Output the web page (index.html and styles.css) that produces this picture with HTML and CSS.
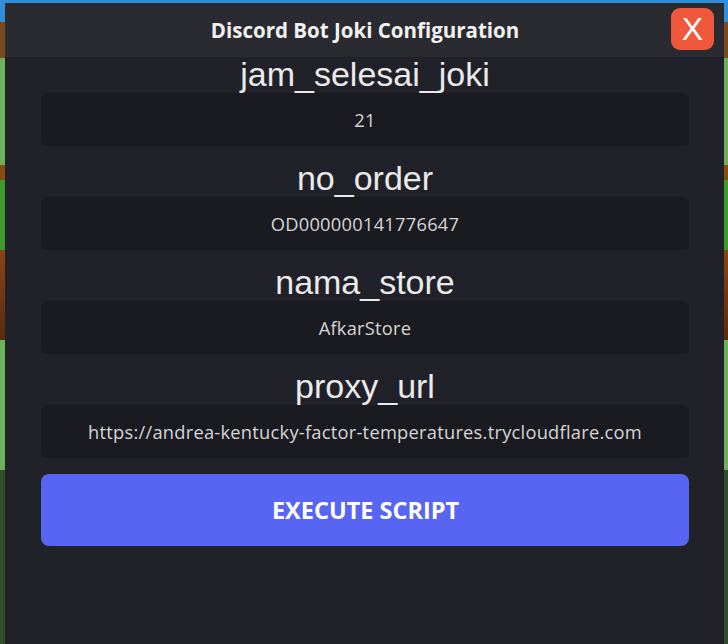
FILE: index.html
```html
<!DOCTYPE html>
<html>
<head>
<meta charset="utf-8">
<link rel="stylesheet" href="styles.css">
</head>
<body>
<div class="scene">
  <div class="modal">
    <div class="header">
      <div class="title">Discord Bot Joki Configuration</div>
      <button class="close">X</button>
    </div>
    <div class="content">
      <div class="field">
        <div class="label">jam_selesai_joki</div>
        <div class="input">21</div>
      </div>
      <div class="field">
        <div class="label">no_order</div>
        <div class="input">OD000000141776647</div>
      </div>
      <div class="field">
        <div class="label">nama_store</div>
        <div class="input">AfkarStore</div>
      </div>
      <div class="field">
        <div class="label">proxy_url</div>
        <div class="input">https://andrea-kentucky-factor-temperatures.trycloudflare.com</div>
      </div>
      <button class="execute">EXECUTE SCRIPT</button>
    </div>
  </div>
</div>
</body>
</html>
```
FILE: styles.css
```css
html, body {
  margin: 0;
  height: 100%;
}
body {
  background:
    linear-gradient(180deg, #2f8fd8 0px, #2f8fd8 22px, #7a4a1e 22px, #7a4a1e 58px, #6db05a 58px, #6db05a 165px, #8a4a14 165px, #8a4a14 180px, #3d9a2c 180px, #3d9a2c 250px, #8a4416 250px, #5a2a0c 340px, #6db05a 340px, #6db05a 470px, #2f4f2a 470px, #2f4f2a 644px);
  font-family: "Liberation Sans", Arial, sans-serif;
  overflow: hidden;
}
.scene {
  padding: 3px 4px 0 5px;
  height: 100%;
  box-sizing: border-box;
  display: flex;
}
.modal {
  flex: 1;
  background: #212229;
  display: flex;
  flex-direction: column;
}
.header {
  position: relative;
  height: 54px;
  background: #2a2b31;
  display: flex;
  align-items: center;
  justify-content: center;
}
.title {
  font-family: "Open Sans", "Noto Sans", sans-serif;
  font-weight: 700;
  font-size: 20.5px;
  color: #f2f2f2;
  margin-left: 1px;
  margin-top: -1px;
}
.close {
  position: absolute;
  right: 10px;
  top: 5px;
  width: 43px;
  height: 42px;
  border: none;
  border-radius: 9px;
  background: #f0583c;
  color: #fff;
  font-family: "Liberation Sans", Arial, sans-serif;
  font-size: 32px;
  padding: 0;
  line-height: 42px;
}
.content {
  padding: 0 35px 0 36px;
  display: flex;
  flex-direction: column;
  gap: 15px;
}
.field {
  display: flex;
  flex-direction: column;
}
.label {
  height: 36px;
  line-height: 34px;
  text-align: center;
  font-size: 34px;
  color: #eaeaea;
}
.input {
  height: 53px;
  background: #1a1b21;
  border-radius: 6px;
  display: flex;
  align-items: center;
  justify-content: center;
  font-family: "Open Sans", "Noto Sans", sans-serif;
  font-size: 18.3px;
  letter-spacing: 0.25px;
  color: #d6d6d6;
}
.execute {
  height: 72px;
  margin-top: 1px;
  border: none;
  border-radius: 8px;
  background: #5865f2;
  color: #fff;
  font-family: "Open Sans", "Noto Sans", sans-serif;
  font-weight: 700;
  font-size: 23.5px;
  padding: 0 0 0 1px;
  line-height: 72px;
}
```
